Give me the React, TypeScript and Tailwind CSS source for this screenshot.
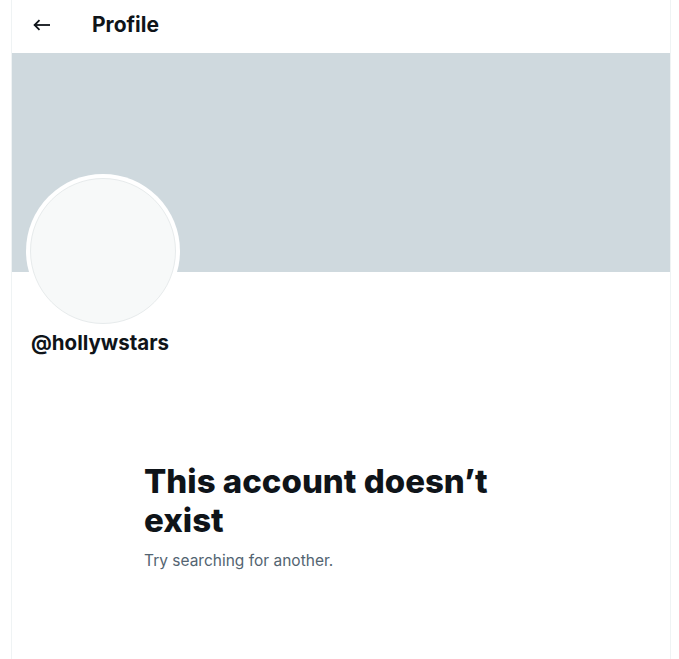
export default function App() {
  return (
    <div className="h-[659px] w-[679px] overflow-hidden bg-white font-['Inter',sans-serif] text-[#0f1419]">
      <div className="ml-[11px] h-full w-[660px] border-x border-[#eff3f4]">
        <header className="flex h-[53px] items-center pb-1">
          <div className="flex w-[80px] items-center pl-[21px]">
            <svg width="18" height="12" viewBox="0 0 18 12" fill="none" stroke="currentColor" strokeWidth="1.8">
              <path d="M1.5 6H17" />
              <path d="M6.5 1.2L1.6 6l4.9 4.8" strokeLinejoin="miter" />
            </svg>
          </div>
          <h2 className="text-[21px] font-bold leading-6">Profile</h2>
        </header>
        <div className="h-[219px] bg-[#cfd9de]" />
        <div className="px-4">
          <div className="-mt-[98px] ml-[-2px] flex h-[154px] w-[154px] items-center justify-center rounded-full bg-white">
            <div className="h-[146px] w-[146px] rounded-full border border-[#e7ebec] bg-[#f7f9f9]" />
          </div>
          <div className="mt-[3px] pl-[3px] text-[20.5px] font-bold leading-6">@hollywstars</div>
        </div>
        <div className="ml-[132px] mt-[107px] w-[380px]">
          <h1 className="text-[33px] font-extrabold leading-[39px]">This account doesn’t exist</h1>
          <p className="mt-[11px] text-[15.5px] leading-5 text-[#536471]">Try searching for another.</p>
        </div>
      </div>
    </div>
  );
}
